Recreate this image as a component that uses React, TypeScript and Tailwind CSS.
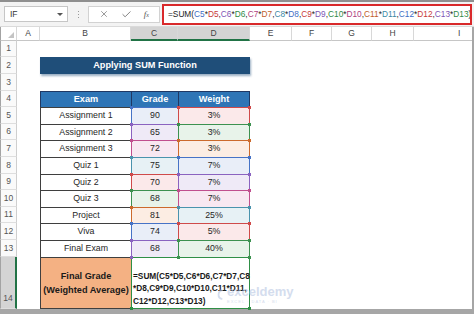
import { X, Check } from "lucide-react";
import clsx from "clsx";

// reference colours Excel cycles through while editing a formula
const PAL: Record<string, { bd: string; bg: string; tx: string; dot: string }> = {
  blue: { bd: "border-[#4673c6]", bg: "bg-[#e9eef8]", tx: "text-[#3e6ec4]", dot: "bg-[#4673c6]" },
  red: { bd: "border-[#cf4a4a]", bg: "bg-[#fbe9ea]", tx: "text-[#c83a3a]", dot: "bg-[#cf4a4a]" },
  purple: { bd: "border-[#8a63c0]", bg: "bg-[#efeaf7]", tx: "text-[#7d55b5]", dot: "bg-[#8a63c0]" },
  green: { bd: "border-[#3c9150]", bg: "bg-[#e8f3ea]", tx: "text-[#2f8a45]", dot: "bg-[#3c9150]" },
  magenta: { bd: "border-[#c04f8e]", bg: "bg-[#f8e8f1]", tx: "text-[#b0407f]", dot: "bg-[#c04f8e]" },
  orange: { bd: "border-[#cc6a2c]", bg: "bg-[#fcede3]", tx: "text-[#c0602a]", dot: "bg-[#cc6a2c]" },
  teal: { bd: "border-[#4a93ad]", bg: "bg-[#e7f1f5]", tx: "text-[#3a88a5]", dot: "bg-[#4a93ad]" },
};
const CYCLE = ["blue", "red", "purple", "green", "magenta", "orange", "teal"];

const rows = [
  { n: 5, exam: "Assignment 1", grade: "90", weight: "3%", h: "h-[17px]" },
  { n: 6, exam: "Assignment 2", grade: "65", weight: "3%", h: "h-[16px]" },
  { n: 7, exam: "Assignment 3", grade: "72", weight: "3%", h: "h-[17px]" },
  { n: 8, exam: "Quiz 1", grade: "75", weight: "7%", h: "h-[17px]" },
  { n: 9, exam: "Quiz 2", grade: "70", weight: "7%", h: "h-[16px]" },
  { n: 10, exam: "Quiz 3", grade: "68", weight: "7%", h: "h-[17px]" },
  { n: 11, exam: "Project", grade: "81", weight: "25%", h: "h-[16px]" },
  { n: 12, exam: "Viva", grade: "74", weight: "5%", h: "h-[17px]" },
  { n: 13, exam: "Final Exam", grade: "68", weight: "40%", h: "h-[17px]" },
];

const RowHead = ({ n, active }: { n: number; active?: boolean }) => (
  <div
    className={clsx(
      "w-[17px] shrink-0 flex justify-center text-[8.5px] text-[#555] border-l border-l-[#a3a3a3] border-b border-b-[#dedede]",
      active
        ? "bg-[#d4d4d4] border-r-2 border-r-[#217346] items-end pb-[3px]"
        : "bg-[#fafafa] border-r border-r-[#cfcfcf] items-center"
    )}
  >
    {n}
  </div>
);

const RefCell = ({
  w,
  color,
  text,
  right,
  lastRow,
}: {
  w: string;
  color: string;
  text: string;
  right?: boolean;
  lastRow?: boolean;
}) => {
  const c = PAL[color];
  return (
    <div
      className={clsx(
        "relative shrink-0 flex items-center justify-center border-l border-t text-[8.8px] text-[#262626]",
        w,
        c.bd,
        c.bg,
        right && "border-r"
      )}
    >
      {text}
      <span className={clsx("absolute z-10 -left-[2px] -top-[2px] w-[3px] h-[3px]", c.dot)} />
      {right && <span className={clsx("absolute z-10 -right-[2px] -top-[2px] w-[3px] h-[3px]", c.dot)} />}
      {lastRow && <span className={clsx("absolute z-10 -left-[2px] -bottom-[2px] w-[3px] h-[3px]", c.dot)} />}
      {lastRow && right && (
        <span className={clsx("absolute z-10 -right-[2px] -bottom-[2px] w-[3px] h-[3px]", c.dot)} />
      )}
    </div>
  );
};

const FormulaBarText = () => {
  const parts: React.ReactNode[] = [<span key="s">=SUM(</span>];
  for (let i = 0; i < 9; i++) {
    const r = i + 5;
    const cc = PAL[CYCLE[(2 * i) % 7]];
    const dc = PAL[CYCLE[(2 * i + 1) % 7]];
    parts.push(
      <span key={r}>
        <span className={cc.tx}>C{r}</span>*<span className={dc.tx}>D{r}</span>
        {i < 8 ? "," : ")"}
      </span>
    );
  }
  return <>{parts}</>;
};

const Toolbar = () => (
  <div className="h-[25px] bg-[#f3f3f3] flex items-center border-b border-[#dadada]">
    <div className="ml-[4px] w-[64px] h-[16px] bg-white border border-[#c6c6c6] flex items-center pl-[5px] pr-[4px] text-[8.5px] text-[#333]">
      IF
      <span className="ml-auto w-0 h-0 border-x-[3px] border-t-[3px] border-x-transparent border-t-[#555]" />
    </div>
    <div className="w-[20px] flex flex-col items-center gap-[2px]">
      <span className="w-[1px] h-[1px] bg-[#9a9a9a]" />
      <span className="w-[1px] h-[1px] bg-[#9a9a9a]" />
      <span className="w-[1px] h-[1px] bg-[#9a9a9a]" />
    </div>
    <div className="w-[72px] h-[17px] bg-white border border-[#d2d2d2] flex items-center justify-around px-[4px] text-[#555]">
      <X size={10} strokeWidth={1.4} />
      <Check size={11} strokeWidth={1.6} />
      <span className="font-['Liberation_Serif',serif] italic text-[9px] leading-none">
        f<span className="text-[6px]">x</span>
      </span>
    </div>
    <div className="ml-[2px] w-[310px] h-[21px] bg-white border-2 border-[#d9292b] flex items-center pl-[4px] text-[8.3px] text-[#222] whitespace-nowrap overflow-hidden">
      <FormulaBarText />
    </div>
  </div>
);

const ColHeaders = () => {
  const base = "flex items-center justify-center text-[8.5px] text-[#444] border-r border-r-[#d8d8d8]";
  const norm = "border-b border-b-[#c6c6c6] bg-white";
  const act = "border-b-2 border-b-[#217346] bg-[#d4d4d4]";
  return (
    <div className="flex h-[14px]">
      <div className={clsx("w-[17px] border-l border-l-[#a3a3a3] relative", norm, "border-r border-r-[#d8d8d8]")}>
        <svg className="absolute right-[2px] bottom-[2px]" width="6" height="6" viewBox="0 0 6 6">
          <polygon points="6,0 6,6 0,6" fill="#c4c4c4" />
        </svg>
      </div>
      <div className={clsx(base, norm, "w-[23px]")}>A</div>
      <div className={clsx(base, norm, "w-[91px]")}>B</div>
      <div className={clsx(base, act, "w-[47px]")}>C</div>
      <div className={clsx(base, act, "w-[72px]")}>D</div>
      <div className={clsx(base, norm, "w-[42px]")}>E</div>
      <div className={clsx(base, norm, "w-[40px]")}>F</div>
      <div className={clsx(base, norm, "w-[40px]")}>G</div>
      <div className={clsx(base, norm, "w-[42px]")}>H</div>
      <div className="flex-1 flex items-center pl-[44px] text-[8.5px] text-[#444] border-b border-b-[#c6c6c6]">I</div>
    </div>
  );
};

export default function App() {
  return (
    <div className="relative w-[474px] h-[314px] overflow-hidden bg-white font-['Liberation_Sans',Arial,sans-serif] text-[#262626]">
      <div className="h-[2px] bg-[#8f8f8f]" />
      <Toolbar />
      <div className="flex">
        <div className="w-[472px]">
          <ColHeaders />

          {/* row 1 */}
          <div className="flex h-[16px]">
            <RowHead n={1} />
          </div>

          {/* row 2 - title */}
          <div className="flex h-[17px]">
            <RowHead n={2} />
            <div className="w-[23px]" />
            <div className="w-[210px] bg-[#1f4e79] shadow-[1px_2px_2px_rgba(31,78,121,0.45)] flex items-center justify-center text-white font-bold text-[9.2px]">
              Applying SUM Function
            </div>
          </div>

          {/* row 3 */}
          <div className="flex h-[17px]">
            <RowHead n={3} />
          </div>

          {/* row 4 - table header */}
          <div className="flex h-[16px]">
            <RowHead n={4} />
            <div className="w-[23px]" />
            <div className="w-[91px] bg-[#2e75b6] border-l border-t border-[#1f3864] flex items-center justify-center text-white font-bold text-[9.2px]">
              Exam
            </div>
            <div className="w-[47px] bg-[#2e75b6] border-l border-t border-[#1f3864] flex items-center justify-center text-white font-bold text-[9.2px]">
              Grade
            </div>
            <div className="w-[72px] bg-[#2e75b6] border-l border-t border-r border-[#1f3864] flex items-center justify-center text-white font-bold text-[9.2px]">
              Weight
            </div>
          </div>

          {rows.map((r, i) => (
            <div key={r.n} className={clsx("flex", r.h)}>
              <RowHead n={r.n} />
              <div className="w-[23px]" />
              <div className="w-[91px] border-l border-t border-[#3f3f3f] bg-white flex items-center justify-center text-[8.8px]">
                {r.exam}
              </div>
              <RefCell w="w-[47px]" color={CYCLE[(2 * i) % 7]} text={r.grade} lastRow={i === 8} />
              <RefCell w="w-[72px]" color={CYCLE[(2 * i + 1) % 7]} text={r.weight} right lastRow={i === 8} />
            </div>
          ))}

          {/* row 14 - result */}
          <div className="flex h-[52px]">
            <RowHead n={14} active />
            <div className="w-[23px]" />
            <div className="w-[91px] bg-[#f4b183] border-l border-t border-b border-[#3f3f3f] flex flex-col items-center justify-center font-bold text-[9.2px] leading-[14px] text-[#1a1a1a]">
              <div>Final Grade</div>
              <div>(Weighted Average)</div>
            </div>
            <div className="relative w-[119px] bg-white border border-[#2f8f46] flex flex-col justify-end pb-[1px] pl-[1px] font-bold text-[8.3px] leading-[12.5px] text-[#1a1a1a] whitespace-nowrap">
              <div>=SUM(C5*D5,C6*D6,C7*D7,C8</div>
              <div>*D8,C9*D9,C10*D10,C11*D11,</div>
              <div>C12*D12,C13*D13)</div>
              <span className="absolute -left-[2px] -bottom-[2px] w-[3px] h-[3px] bg-[#2f8f46]" />
              <span className="absolute -right-[2px] -bottom-[2px] w-[3px] h-[3px] bg-[#2f8f46]" />
            </div>
          </div>
        </div>
        <div className="w-[2px] bg-[#a6a6a6]" />
      </div>
      <div className="h-[5px] bg-[#a6a6a6]" />

      {/* faint watermark behind the result cell */}
      <div className="absolute left-[216px] top-[285px] flex items-center gap-[2px] opacity-60 pointer-events-none">
        <svg width="9" height="13" viewBox="0 0 10 14">
          <path d="M7 2 C2 3 1 11 7 12" stroke="#b9c8e4" strokeWidth="2" fill="none" />
        </svg>
        <div className="flex flex-col items-start">
          <span className="text-[13px] font-bold leading-none text-[#b9c8e4]">exceldemy</span>
          <span className="text-[4px] tracking-[1px] leading-none mt-[2px] text-[#b9c8e4]">EXCEL · DATA · BI</span>
        </div>
      </div>
    </div>
  );
}
